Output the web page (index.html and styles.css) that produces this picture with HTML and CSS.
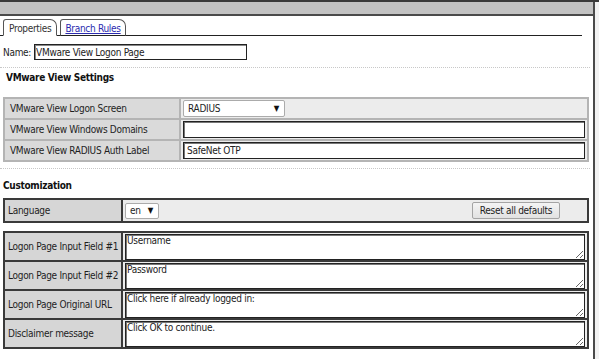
FILE: index.html
```html
<!DOCTYPE html>
<html lang="en">
<head>
  <meta charset="UTF-8">
  <title>VMware View Logon Page</title>
  <link rel="stylesheet" href="styles.css">
</head>
<body>
  <div class="frame">
    <div class="window">
      <!-- barra de titulo -->
      <div class="topbar"></div>

      <div class="tabs">
        <div class="tab active">Properties</div>
        <div class="tab"><a href="#">Branch Rules</a></div>
      </div>

      <div class="name-row">
        <label for="name">Name:</label>
        <input type="text" id="name" class="name-input" value="VMware View Logon Page">
      </div>

      <div class="sep"></div>
      <h3 class="section-title">VMware View Settings</h3>

      <table class="grid light">
        <tr>
          <td class="lbl">VMware View Logon Screen</td>
          <td class="val"><span class="select radius"><span>RADIUS</span><span class="arrow">▼</span></span></td>
        </tr>
        <tr>
          <td class="lbl">VMware View Windows Domains</td>
          <td class="val"><input type="text" class="field" value=""></td>
        </tr>
        <tr>
          <td class="lbl">VMware View RADIUS Auth Label</td>
          <td class="val"><input type="text" class="field" value="SafeNet OTP"></td>
        </tr>
      </table>

      <div class="sep sep-2"></div>
      <h3 class="section-title custom-title">Customization</h3>

      <table class="grid dark lang">
        <tr>
          <td class="lbl">Language</td>
          <td class="val">
            <div class="lang-cell">
              <span class="select small"><span>en</span><span class="arrow">▼</span></span>
              <button class="reset">Reset all defaults</button>
            </div>
          </td>
        </tr>
      </table>

      <table class="grid dark texts">
        <tr>
          <td class="lbl">Logon Page Input Field #1</td>
          <td class="val"><textarea>Username</textarea></td>
        </tr>
        <tr>
          <td class="lbl">Logon Page Input Field #2</td>
          <td class="val"><textarea>Password</textarea></td>
        </tr>
        <tr>
          <td class="lbl">Logon Page Original URL</td>
          <td class="val"><textarea>Click here if already logged in:</textarea></td>
        </tr>
        <tr>
          <td class="lbl">Disclaimer message</td>
          <td class="val"><textarea>Click OK to continue.</textarea></td>
        </tr>
      </table>
    </div>
    <div class="edge"></div>
  </div>
</body>
</html>
```

FILE: styles.css
```css
* {
  margin: 0;
  padding: 0;
  box-sizing: border-box;
}

body {
  font-family: "DejaVu Sans Condensed", "DejaVu Sans", sans-serif;
  font-size: 10px;
  letter-spacing: -0.3px;
  color: #1e1e1e;
  background: #fff;
  width: 599px;
  height: 359px;
  overflow: hidden;
}

.frame {
  display: flex;
  height: 359px;
  border-top: 2px solid #3a3a3a;
}

.window {
  width: 595px;
  border-right: 2px solid #4a4a4a;
}

.edge {
  flex: 1;
  background: #f2f2f2;
}

.topbar {
  height: 14px;
  background: #c2c2c2;
  border-bottom: 2px solid #4a4a4a;
}

/* abas */
.tabs {
  display: flex;
  align-items: flex-end;
  gap: 3px;
  width: 582px;
  padding: 3px 0 0 3px;
  border-bottom: 1px solid #222;
}

.tab {
  height: 17px;
  padding: 0 4px;
  border: 1px solid #555;
  border-radius: 3px 7px 0 0;
  line-height: 17px;
  background: #fff;
  margin-bottom: -1px;
  border-bottom: 1px solid #222;
}

.tab.active {
  padding: 0 5px;
  border-bottom-color: #fff;
  color: #333;
}

.tab a {
  color: #2b2bb0;
  text-decoration: underline;
}

.name-row {
  display: flex;
  align-items: center;
  gap: 3px;
  padding-left: 3px;
  margin-top: 8px;
}

.name-input {
  width: 213px;
  height: 16px;
  font: inherit;
  letter-spacing: inherit;
  color: #222;
  padding: 0 1px;
  border: 1px solid #222;
  box-shadow: inset 1px 1px 0 #888;
}

.sep {
  width: 590px;
  margin-top: 7px;
  border-top: 1px dotted #c8c8c8;
}

.section-title {
  font-size: 10px;
  font-weight: bold;
  color: #111;
  line-height: 13px;
  padding-left: 6px;
  margin-top: 3px;
}

/* tabelas */
.grid {
  width: 586px;
  margin-left: 3px;
  border-collapse: collapse;
}

.grid td {
  padding: 0 2px;
  vertical-align: middle;
}

.grid .lbl {
  background: #dadada;
  padding-left: 5px;
  white-space: nowrap;
}

.grid .val {
  background: #ececec;
}

.light {
  margin-top: 13px;
  border: 2px solid #a9a9a9;
}

.light td {
  border: 2px solid #b4b4b4;
  height: 21px;
}

.light .lbl {
  width: 176px;
}

.dark {
  border: 2px solid #333;
}

.dark td {
  border: 2px solid #3a3a3a;
}

.dark .lbl {
  width: 118px;
  padding-left: 3px;
  background: #d6d6d6;
}

.select {
  display: inline-flex;
  align-items: center;
  justify-content: space-between;
  height: 17px;
  padding: 0 5px 0 4px;
  background: #fff;
  border: 1px solid #ababab;
  border-radius: 2px;
}

.select .arrow {
  font-size: 8px;
  color: #111;
}

.radius {
  width: 102px;
}

.small {
  width: 34px;
  height: 16px;
}

.field {
  width: 100%;
  height: 17px;
  font: inherit;
  letter-spacing: inherit;
  color: #222;
  padding: 0 3px;
  border: 1px solid #222;
  box-shadow: inset 1px 1px 0 #777;
  background: #fff;
}

.sep-2 {
  margin-top: 6px;
}

.custom-title {
  margin-top: 10px;
  padding-left: 3px;
}

.lang {
  margin-top: 6px;
}

.lang td {
  height: 23px;
}

.lang-cell {
  display: flex;
  align-items: center;
  justify-content: space-between;
  padding-right: 25px;
}

.reset {
  width: 88px;
  height: 17px;
  font: inherit;
  letter-spacing: inherit;
  color: #222;
  background: linear-gradient(#f4f4f4, #e2e2e2);
  border: 1px solid #a4a4a4;
  border-radius: 2px;
}

.texts {
  margin-top: 8px;
}

.texts td {
  height: 29px;
}

.texts textarea {
  display: block;
  width: 100%;
  height: 26px;
  font: inherit;
  letter-spacing: inherit;
  color: #222;
  padding: 0 1px;
  border: 1px solid #222;
  box-shadow: inset 1px 1px 0 #777;
  resize: vertical;
  overflow: hidden;
}
```
